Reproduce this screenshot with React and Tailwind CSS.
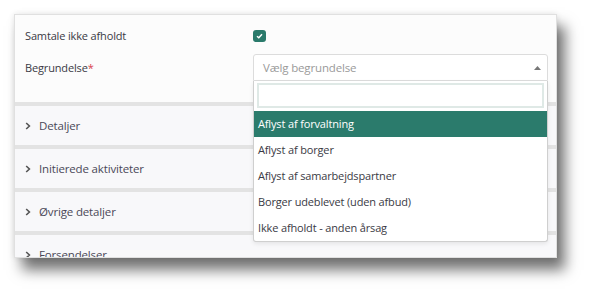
import React from "react";

const sections = ["Detaljer", "Initierede aktiviteter", "Øvrige detaljer", "Forsendelser"];
const options = [
  "Aflyst af forvaltning",
  "Aflyst af borger",
  "Aflyst af samarbejdspartner",
  "Borger udeblevet (uden afbud)",
  "Ikke afholdt - anden årsag",
];

const Chevron = () => (
  <svg width="6" height="8" viewBox="0 0 6 8" className="mr-[8px]">
    <path d="M1.2 1 L4.4 4 L1.2 7" fill="none" stroke="#555" strokeWidth="1.6" />
  </svg>
);

const App = () => {
  return (
    <div className="w-[593px] h-[293px] bg-white pl-[14px] pt-[14px] font-['Open_Sans',sans-serif] text-[11px] tracking-[-0.15px]">
      <div className="relative w-[543px] h-[244px] border border-[#e0e0e0] bg-[#fcfcfc] shadow-[0_0_6px_rgba(0,0,0,0.10),8px_12px_13px_rgba(0,0,0,0.55)]">
        <div className="h-[242px] overflow-hidden">
          {/* form area */}
          <div className="h-[87px] pl-[10px] pt-[11px] text-[#3a3a44]">
            <div className="flex items-center h-[20px]">
              <span className="w-[228px]">Samtale ikke afholdt</span>
              <span className="flex items-center justify-center w-[13px] h-[12px] rounded-[3px] bg-[#2a7a6b]">
                <svg width="7" height="6" viewBox="0 0 7 6">
                  <path d="M1 3.2 L2.8 4.8 L6 1.2" fill="none" stroke="#fff" strokeWidth="1.5" />
                </svg>
              </span>
            </div>
            <div className="flex items-center h-[20px] mt-[12px]">
              <span>
                Begrundelse<span className="text-[#d9414f]">*</span>
              </span>
            </div>
          </div>
          {sections.map((s) => (
            <div key={s}>
              <div className="h-[4px] bg-[#e3e3e3]" />
              <div className="h-[39px] flex items-center pl-[10px] bg-[#f8f8fa] text-[#4a4858] text-[11.5px]">
                <Chevron />
                <span>{s}</span>
              </div>
            </div>
          ))}
        </div>

        {/* select + dropdown */}
        <div className="absolute left-[238px] top-[39px] w-[295px]">
          <div className="h-[27px] flex items-center justify-between pl-[9px] pr-[6px] border border-[#dcdcdc] rounded-t-[3px] bg-white text-[#9a9a9a] text-[11.5px]">
            <span>Vælg begrundelse</span>
            <svg width="7" height="4" viewBox="0 0 7 4">
              <path d="M0 4 L3.5 0 L7 4 Z" fill="#777" />
            </svg>
          </div>
          <div className="border border-t-0 border-[#cfcfcf] rounded-b-[3px] bg-white shadow-[0_2px_4px_rgba(0,0,0,0.08)]">
            <div className="px-[3px] pt-[2px] pb-[3px]">
              <div className="h-[25px] border-2 border-[#dfe9e6] bg-white" />
            </div>
            {options.map((o, i) => (
              <div
                key={o}
                className={
                  i === 0
                    ? "h-[26px] flex items-center pl-[4px] bg-[#2b7b6c] text-white"
                    : "h-[26px] flex items-center pl-[4px] text-[#3a3a44]"
                }
              >
                {o}
              </div>
            ))}
          </div>
        </div>
      </div>
    </div>
  );
};

export default App;
